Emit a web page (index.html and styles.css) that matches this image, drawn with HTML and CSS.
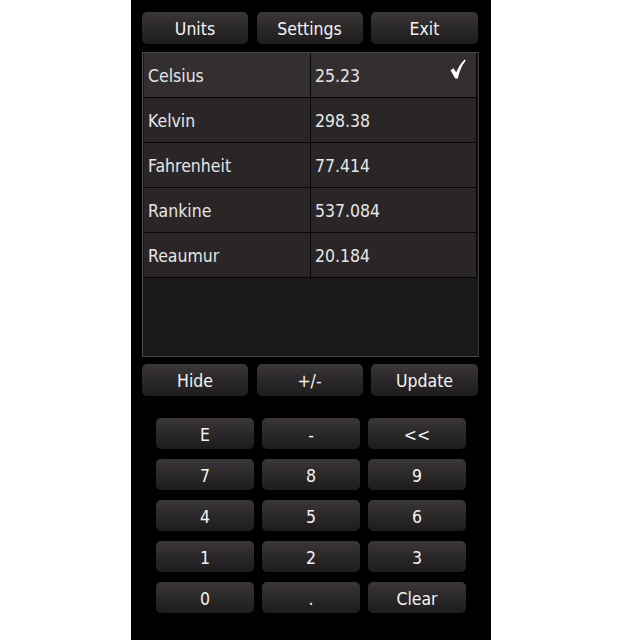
FILE: index.html
```html
<!DOCTYPE html>
<html>
<head>
<meta charset="utf-8">
<link rel="stylesheet" href="styles.css">
</head>
<body>
<div class="screen">
  <div class="bar top">
    <div class="btn">Units</div>
    <div class="btn">Settings</div>
    <div class="btn">Exit</div>
  </div>
  <div class="panel">
    <div class="table">
      <div class="row sel"><div class="cell name">Celsius</div><div class="cell val">25.23<svg class="check" viewBox="0 0 16 20" width="16" height="20"><path d="M0.5 11.2 L3.6 9.2 L6.2 13.6 C8.2 8.6 10.8 4 14.6 0.4 L15.8 1.6 C12.2 5.8 9.8 11.2 7.8 19.5 L5.2 19.5 Z" fill="#fff"/></svg></div></div>
      <div class="row"><div class="cell name">Kelvin</div><div class="cell val">298.38</div></div>
      <div class="row"><div class="cell name">Fahrenheit</div><div class="cell val">77.414</div></div>
      <div class="row"><div class="cell name">Rankine</div><div class="cell val">537.084</div></div>
      <div class="row"><div class="cell name">Reaumur</div><div class="cell val">20.184</div></div>
    </div>
  </div>
  <div class="bar bottom">
    <div class="btn">Hide</div>
    <div class="btn">+/-</div>
    <div class="btn">Update</div>
  </div>
  <div class="keypad">
    <div class="key">E</div><div class="key">-</div><div class="key">&lt;&lt;</div>
    <div class="key">7</div><div class="key">8</div><div class="key">9</div>
    <div class="key">4</div><div class="key">5</div><div class="key">6</div>
    <div class="key">1</div><div class="key">2</div><div class="key">3</div>
    <div class="key">0</div><div class="key">.</div><div class="key">Clear</div>
  </div>
</div>
</body>
</html>
```
FILE: styles.css
```css
html, body {
  margin: 0;
  padding: 0;
  background: #fff;
}
.screen {
  margin-left: 131px;
  width: 360px;
  height: 640px;
  background: #000;
  box-sizing: border-box;
  padding: 12px 12px 0 11px;
  font-family: "DejaVu Sans Condensed", "DejaVu Sans", sans-serif;
  color: #f2f2f2;
}
.bar {
  display: grid;
  grid-template-columns: 106px 106px 107px;
  column-gap: 8.5px;
}
.btn, .key {
  height: 32px;
  box-sizing: border-box;
  padding-top: 2px;
  border-radius: 5px;
  background: linear-gradient(#3b3739, #2b282a 50%, #1f1c1e);
  display: flex;
  align-items: center;
  justify-content: center;
  font-size: 17.5px;
  color: #f4f4f4;
}
.panel {
  margin-top: 8px;
  height: 305px;
  box-sizing: border-box;
  border: 1px solid #4a4749;
  border-right-color: #3a3739;
  background: #1b181a;
  padding: 0 1px 0 1px;
}
.table {
  display: flex;
  flex-direction: column;
}
.row {
  display: grid;
  grid-template-columns: 167px 1fr;
  height: 45px;
  box-sizing: border-box;
  border-bottom: 1px solid #070607;
  border-right: 1px solid #070607;
  background: #2a2628;
}
.row.sel {
  background: #332f31;
}
.cell {
  display: flex;
  align-items: center;
  padding-left: 4px;
  padding-top: 2px;
  font-size: 17.5px;
  color: #e6e6e6;
  position: relative;
}
.cell.name {
  border-right: 1px solid #070607;
}
.check {
  position: absolute;
  right: 10px;
  top: 6px;
}
.bottom {
  margin-top: 7px;
}
.keypad {
  margin-top: 22px;
  display: grid;
  grid-template-columns: 98px 98px 98px;
  column-gap: 8px;
  row-gap: 10px;
  justify-content: center;
  padding-left: 1px;
}
.key {
  height: 31px;
}
```
